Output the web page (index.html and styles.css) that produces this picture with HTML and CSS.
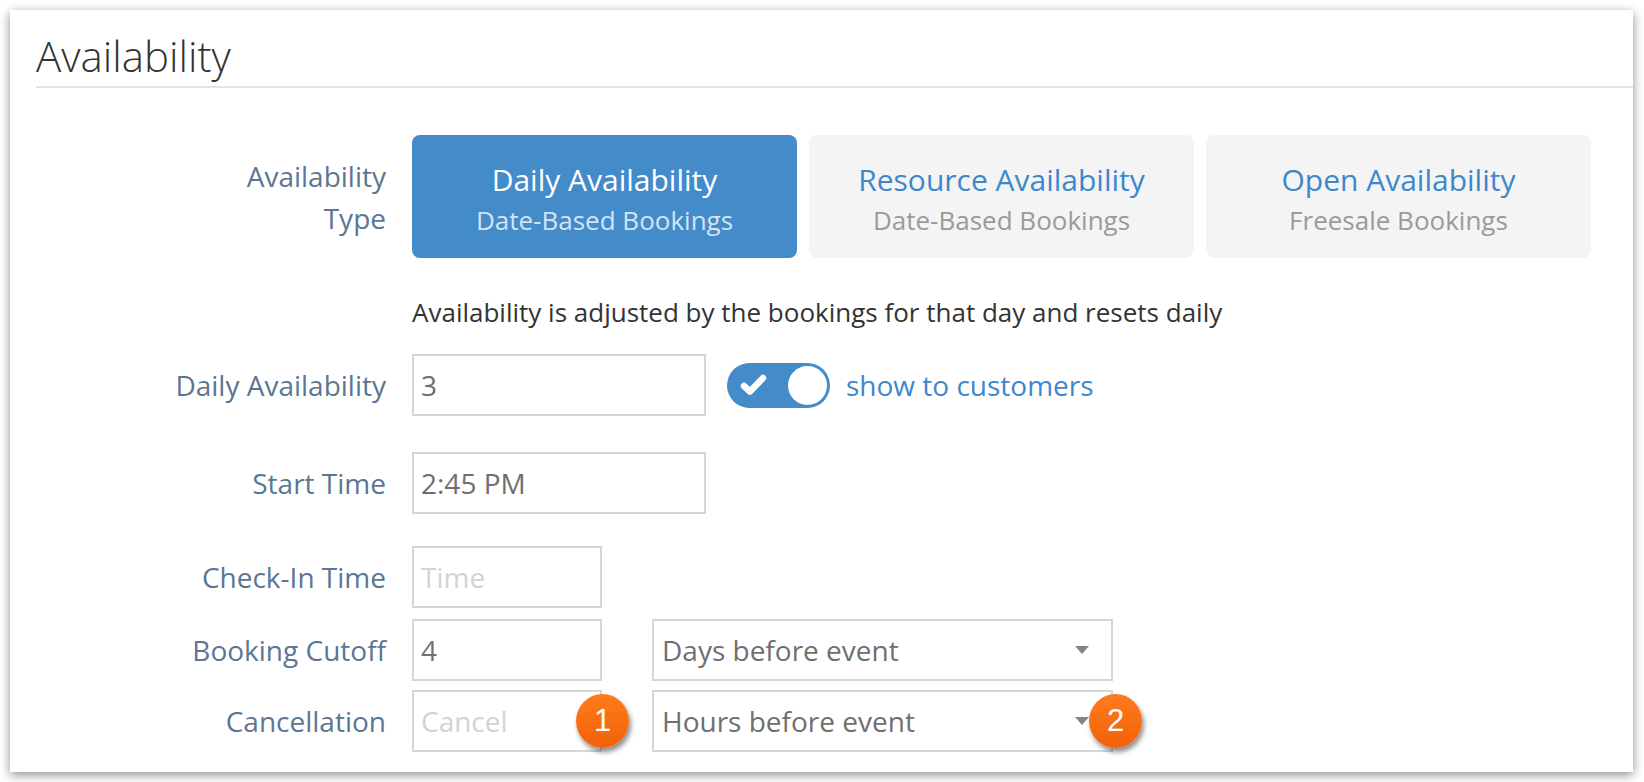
FILE: index.html
```html
<!DOCTYPE html>
<html lang="en">
<head>
    <meta charset="UTF-8">
    <title>Availability</title>
    <link rel="stylesheet" href="styles.css">
</head>
<body>
    <div class="panel">
        <div class="panel-head">
            <h1>Availability</h1>
        </div>

        <div class="panel-body">
            <div class="row row-type">
                <div class="row-label">Availability<br>Type</div>
                <div class="type-options">
                    <div class="type-option active">
                        <span class="type-title">Daily Availability</span>
                        <span class="type-sub">Date-Based Bookings</span>
                    </div>
                    <div class="type-option">
                        <span class="type-title">Resource Availability</span>
                        <span class="type-sub">Date-Based Bookings</span>
                    </div>
                    <div class="type-option">
                        <span class="type-title">Open Availability</span>
                        <span class="type-sub">Freesale Bookings</span>
                    </div>
                </div>
            </div>

            <div class="row row-note">
                <div class="row-label"></div>
                <p class="note">Availability is adjusted by the bookings for that day and resets daily</p>
            </div>

            <div class="row row-daily">
                <div class="row-label">Daily Availability</div>
                <input class="field field-wide" type="text" value="3">
                <div class="toggle">
                    <svg class="toggle-check" width="30" height="24" viewBox="0 0 30 24">
                        <path d="M5 13 L11 18.5 L24 5" fill="none" stroke="#fff" stroke-width="6.5" stroke-linecap="round" stroke-linejoin="round"/>
                    </svg>
                    <span class="toggle-knob"></span>
                </div>
                <a class="toggle-text" href="#">show to customers</a>
            </div>

            <div class="row row-start">
                <div class="row-label">Start Time</div>
                <input class="field field-wide" type="text" value="2:45 PM">
            </div>

            <div class="row row-checkin">
                <div class="row-label">Check-In Time</div>
                <input class="field field-small" type="text" placeholder="Time">
            </div>

            <div class="row row-cutoff">
                <div class="row-label">Booking Cutoff</div>
                <input class="field field-small" type="text" value="4">
                <div class="select">
                    <span>Days before event</span>
                    <span class="caret"></span>
                </div>
            </div>

            <div class="row row-cancel">
                <div class="row-label">Cancellation</div>
                <div class="marked">
                    <input class="field field-small" type="text" placeholder="Cancel">
                    <span class="badge">1</span>
                </div>
                <div class="select marked">
                    <span>Hours before event</span>
                    <span class="caret"></span>
                    <span class="badge">2</span>
                </div>
            </div>
        </div>
    </div>
</body>
</html>
```

FILE: styles.css
```css
body {
    margin: 0;
    background-color: #ffffff;
    font-family: "Open Sans", "Liberation Sans", Arial, sans-serif;
}

.panel {
    margin: 10px;
    width: 1623px;
    height: 762px;
    background-color: #fff;
    box-shadow: 0 3px 10px rgba(0,0,0,0.45);
    overflow: hidden;
}

.panel-head {
    margin-left: 26px;
    padding-top: 22px;
    padding-bottom: 6px;
    border-bottom: 2px solid #e4e4e4;
}

.panel-head h1 {
    margin: 0;
    font-size: 42px;
    line-height: 48px;
    font-weight: 300;
    color: #333;
}

.panel-body {
    padding: 47px 42px 0 22px;
}

.row {
    display: flex;
    align-items: center;
}

.row-label {
    flex: none;
    width: 380px;
    box-sizing: border-box;
    padding-right: 26px;
    text-align: right;
    font-size: 28px;
    line-height: 42px;
    color: #5b7694;
}

/* availability type buttons */
.type-options {
    flex: 1;
    display: flex;
    gap: 12px;
}

.type-option {
    flex: 1;
    height: 123px;
    box-sizing: border-box;
    padding-top: 6px;
    display: flex;
    flex-direction: column;
    align-items: center;
    justify-content: center;
    background-color: #f4f4f4;
    border-radius: 8px;
}

.type-title {
    font-size: 30px;
    line-height: 41px;
    color: #3d88cc;
}

.type-sub {
    font-size: 26px;
    line-height: 41px;
    color: #9a9a9a;
}

.type-option.active {
    background-color: #448bca;
}

.type-option.active .type-title {
    color: #fff;
}

.type-option.active .type-sub {
    color: #d3e3f3;
}

.row-note {
    margin-top: 33px;
}

.note {
    margin: 0;
    font-size: 26px;
    line-height: 42px;
    color: #333;
}

/* fields */
.field {
    height: 62px;
    box-sizing: border-box;
    margin: 0;
    padding: 0 7px;
    border: 2px solid #d6d6d6;
    border-radius: 0;
    font-family: inherit;
    font-size: 28px;
    color: #6f6f6f;
    outline: none;
}

.field::placeholder {
    color: #d3d3d3;
}

.field-wide {
    width: 294px;
}

.field-small {
    width: 190px;
}

.row-daily {
    margin-top: 21px;
}

.row-start {
    margin-top: 36px;
}

.row-checkin {
    margin-top: 32px;
}

.row-cutoff {
    margin-top: 11px;
}

.row-cancel {
    margin-top: 9px;
}

.toggle {
    position: relative;
    width: 103px;
    height: 45px;
    margin-left: 21px;
    border-radius: 23px;
    background-color: #448bca;
}

.toggle-check {
    position: absolute;
    left: 12px;
    top: 10px;
}

.toggle-knob {
    position: absolute;
    right: 3px;
    top: 3px;
    width: 39px;
    height: 39px;
    border-radius: 50%;
    background-color: #fff;
}

.toggle-text {
    margin-left: 16px;
    font-size: 28px;
    color: #3d88cc;
    text-decoration: none;
}

.select {
    width: 461px;
    height: 62px;
    box-sizing: border-box;
    margin-left: 50px;
    padding: 0 22px 0 8px;
    border: 2px solid #d6d6d6;
    display: flex;
    align-items: center;
    justify-content: space-between;
    font-size: 28px;
    color: #6f6f6f;
}

.caret {
    width: 0;
    height: 0;
    border-left: 7px solid transparent;
    border-right: 7px solid transparent;
    border-top: 8px solid #858585;
}

.marked {
    position: relative;
}

.marked > .field {
    display: block;
}

.badge {
    position: absolute;
    top: 50%;
    right: -27px;
    width: 53px;
    height: 54px;
    margin-top: -27px;
    border-radius: 50%;
    background: linear-gradient(#ff7c1e, #f36108);
    box-shadow: 2px 4px 5px rgba(0,0,0,0.45);
    color: #fff;
    font-family: "Liberation Sans", Arial, sans-serif;
    font-size: 31px;
    line-height: 54px;
    text-align: center;
}

.select .badge {
    right: -31px;
}
```
